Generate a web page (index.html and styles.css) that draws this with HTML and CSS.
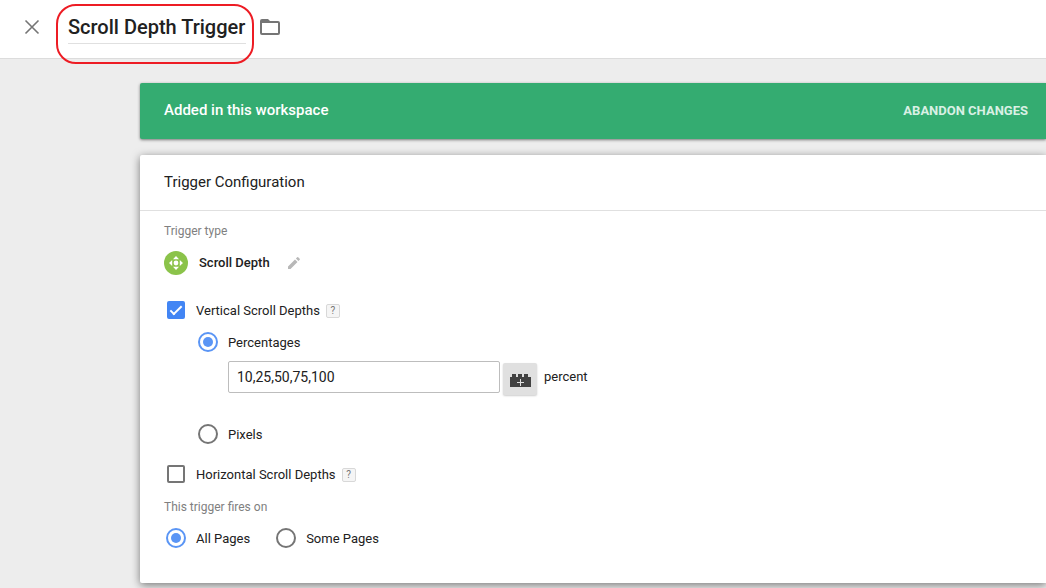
FILE: index.html
```html
<!DOCTYPE html>
<html lang="en">
<head>
    <meta charset="UTF-8">
    <meta name="viewport" content="width=device-width, initial-scale=1.0">
    <title>Scroll Depth Trigger</title>
    <link rel="stylesheet" href="styles.css">
</head>
<body>
    <header class="topbar">
        <button type="button" class="icon-btn" aria-label="Close">
            <svg width="16" height="16" viewBox="0 0 16 16"><path d="M1.5 1.5l13 13M14.5 1.5l-13 13" fill="none" stroke="#757575" stroke-width="1.6"/></svg>
        </button>
        <div class="title-box">
            <input type="text" class="title-input" aria-label="Trigger name" value="Scroll Depth Trigger">
        </div>
        <button type="button" class="icon-btn" aria-label="Move to folder">
            <svg width="20" height="16" viewBox="0 0 20 16"><path d="M2 0h6l2 2h8a2 2 0 0 1 2 2v10a2 2 0 0 1-2 2H2a2 2 0 0 1-2-2V2a2 2 0 0 1 2-2zM2 4v10h16V4z" fill="#757575" fill-rule="evenodd"/></svg>
        </button>
    </header>

    <main class="content">
        <div class="banner">
            <span class="banner-text">Added in this workspace</span>
            <button type="button" class="banner-btn">ABANDON CHANGES</button>
        </div>

        <section class="card">
            <h2 class="card-title">Trigger Configuration</h2>

            <form class="card-body">
                <div class="caption">Trigger type</div>
                <div class="type-row">
                    <svg width="24" height="24" viewBox="0 0 24 24">
                        <circle cx="12" cy="12" r="12" fill="#8bc34a"/>
                        <circle cx="12" cy="12" r="2.4" fill="#fff"/>
                        <path d="M12 5l3 3.200H9zM12 19l3-3.200H9zM5 12l3.200-3v6zM19 12l-3.200-3v6z" fill="#fff"/>
                    </svg>
                    <span class="type-name">Scroll Depth</span>
                    <button type="button" class="icon-btn" aria-label="Edit trigger type">
                        <svg width="12" height="12" viewBox="0 0 12 12"><path d="M0 9.500V12h2.500l7-7L7 2.500zM11.700 2.800a.7.7 0 0 0 0-1L10.200.3a.7.7 0 0 0-1 0L7.900 1.600l2.500 2.500z" fill="#b8b8b8"/></svg>
                    </button>
                </div>

                <div class="row">
                    <input type="checkbox" class="check" id="vertical" checked>
                    <label for="vertical">Vertical Scroll Depths</label>
                    <button type="button" class="help" aria-label="Help">?</button>
                </div>

                <div class="nested">
                    <div class="row">
                        <input type="radio" class="radio" name="unit" id="percentages" checked>
                        <label for="percentages">Percentages</label>
                    </div>
                    <div class="value-row">
                        <input type="text" class="value-input" id="values" value="10,25,50,75,100">
                        <button type="button" class="variable-btn" aria-label="Insert variable">
                            <svg width="21" height="13" viewBox="0 0 21 13">
                                <path d="M0 3h2V0h4v3h2V0h4v3h2V0h4v3h3v10H0z" fill="#424242"/>
                                <path d="M10.500 5v7M7 8.500h7" stroke="#e0e0e0"/>
                            </svg>
                        </button>
                        <label for="values">percent</label>
                    </div>
                    <div class="row">
                        <input type="radio" class="radio" name="unit" id="pixels">
                        <label for="pixels">Pixels</label>
                    </div>
                </div>

                <div class="row horizontal-row">
                    <input type="checkbox" class="check" id="horizontal">
                    <label for="horizontal">Horizontal Scroll Depths</label>
                    <button type="button" class="help" aria-label="Help">?</button>
                </div>

                <div class="caption">This trigger fires on</div>
                <div class="row fires-row">
                    <input type="radio" class="radio" name="fires" id="all-pages" checked>
                    <label for="all-pages">All Pages</label>
                    <input type="radio" class="radio" name="fires" id="some-pages">
                    <label for="some-pages">Some Pages</label>
                </div>
            </form>
        </section>
    </main>
</body>
</html>
```
FILE: styles.css
```css
*,
*::after {
    box-sizing: border-box;
}

body {
    margin: 0;
    background: #ededed;
    color: #212121;
    font-family: Roboto, Arial, sans-serif;
    font-size: 13px;
    line-height: 16px;
}

button,
input {
    margin: 0;
    font-family: inherit;
    color: inherit;
}

svg {
    display: block;
}

.icon-btn {
    padding: 0;
    border: none;
    background: none;
    cursor: pointer;
}

/* Top bar */
.topbar {
    display: flex;
    align-items: center;
    height: 59px;
    padding: 0 24px 4px;
    background: #fff;
    border-bottom: 1px solid #dcdcdc;
}

.title-box {
    position: relative;
    margin: 3px 14px 0 28px;
}

/* Red marker round the trigger name */
.title-box::after {
    content: "";
    position: absolute;
    inset: -9px -8px -20px -12px;
    border: 2px solid #ed1c24;
    border-radius: 20px;
    pointer-events: none;
}

.title-input {
    display: block;
    width: 178px;
    height: 31px;
    padding: 0 0 2px;
    border: none;
    border-bottom: 1px solid #e0e0e0;
    background: none;
    font-size: 20px;
    font-weight: 500;
    outline: none;
}

/* Content */
.content {
    padding: 24px 0 5px 140px;
}

.banner {
    display: flex;
    align-items: center;
    justify-content: space-between;
    height: 56px;
    margin-bottom: 16px;
    padding: 0 18px 2px 24px;
    background: #34ac71;
    border-radius: 2px 0 0 2px;
    box-shadow: 0 1px 3px rgba(0, 0, 0, 0.5);
    color: #fff;
}

.banner-text {
    font-size: 15px;
    font-weight: 500;
}

.banner-btn {
    padding: 0;
    border: none;
    background: none;
    color: #d9f0e4;
    font-size: 13px;
    font-weight: 700;
    cursor: pointer;
}

.card {
    background: #fff;
    border-radius: 2px 0 0 2px;
    box-shadow: 0 2px 8px rgba(0, 0, 0, 0.5);
}

.card-title {
    margin: 0;
    padding: 17px 24px 18px;
    border-bottom: 1px solid #e0e0e0;
    font-size: 15px;
    font-weight: 400;
    line-height: 20px;
}

.card-body {
    padding: 12px 24px 29px;
}

.caption {
    color: #808080;
    font-size: 12px;
}

.type-row {
    display: flex;
    align-items: center;
    margin: 12px 0 19px;
}

.type-name {
    margin: 0 18px 0 11px;
    font-weight: 500;
}

.row {
    display: flex;
    align-items: center;
    height: 32px;
}

.row label {
    padding-top: 2px;
}

.nested {
    padding-left: 32px;
}

.check {
    appearance: none;
    width: 18px;
    height: 18px;
    margin: 0 11px 0 3px;
    border: 2px solid #757575;
    border-radius: 2px;
}

.check:checked {
    display: grid;
    place-items: center;
    border-color: #4285f4;
    background: #4285f4;
}

.check:checked::after {
    content: "";
    width: 6px;
    height: 12px;
    margin-bottom: 3px;
    border: solid #fff;
    border-width: 0 2px 2px 0;
    transform: rotate(45deg);
}

.radio {
    appearance: none;
    display: grid;
    place-items: center;
    width: 20px;
    height: 20px;
    margin: 0 10px 0 2px;
    border: 2px solid #757575;
    border-radius: 50%;
}

.radio:checked {
    border-color: #5a95f5;
}

.radio:checked::after {
    content: "";
    width: 10px;
    height: 10px;
    border-radius: 50%;
    background: #5a95f5;
}

.help {
    width: 14px;
    height: 14px;
    margin: 2px 0 0 6px;
    padding: 0;
    border: 1px solid #d8d8d8;
    border-radius: 2px;
    background: #f5f5f5;
    color: #757575;
    font-size: 10px;
    line-height: 12px;
}

.value-row {
    display: flex;
    align-items: center;
    height: 32px;
    margin: 3px 0 25px 32px;
}

.value-input {
    width: 272px;
    height: 32px;
    padding: 0 8px;
    border: 1px solid #bdbdbd;
    border-radius: 2px;
    font-size: 14px;
}

.variable-btn {
    display: grid;
    place-items: center;
    width: 34px;
    height: 32px;
    margin: 4px 7px 0 3px;
    padding: 2px 0 0;
    border: none;
    border-radius: 2px;
    background: #e0e0e0;
    box-shadow: 0 1px 2px rgba(0, 0, 0, 0.2);
}

.horizontal-row {
    margin: 8px 0 9px;
}

.fires-row {
    margin-top: 7px;
}

.fires-row label {
    margin-right: 24px;
}
```
